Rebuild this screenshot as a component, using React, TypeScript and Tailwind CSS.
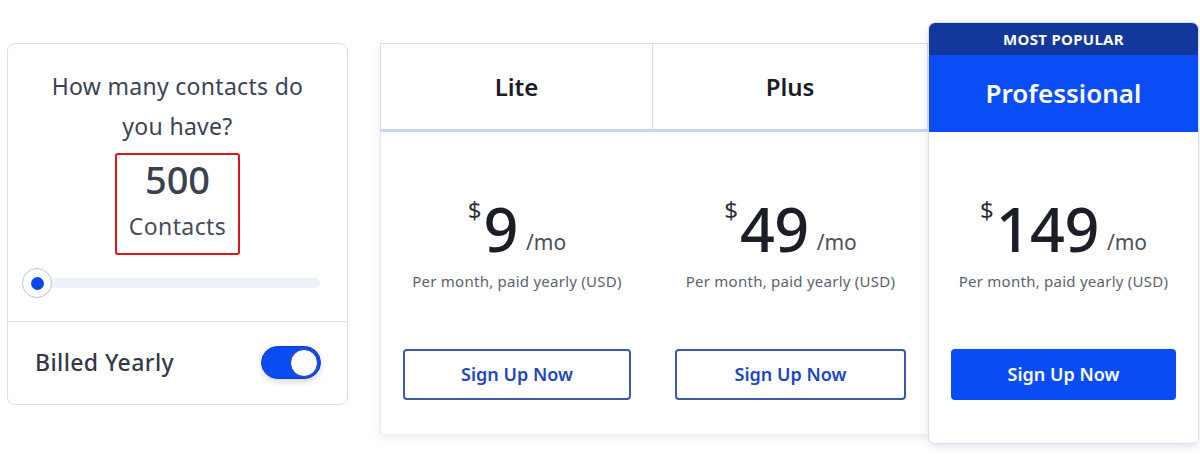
import React from "react";

const font = { fontFamily: '"Noto Sans", "Open Sans", sans-serif' };

function Price({ amount }: { amount: string }) {
  return (
    <div className="flex flex-col items-center">
      <div className="flex items-start h-[64px]">
        <span className="text-[24px] leading-none text-[#2b2f38] mt-[1px] mr-[2px]">$</span>
        <span className="text-[61px] leading-[64px] font-medium text-[#1b1e26] tracking-[-0.5px]">{amount}</span>
        <span className="text-[21px] leading-none text-[#4a5160] self-end mb-[8px] ml-[8px]">/mo</span>
      </div>
      <div className="mt-[9px] text-[15px] tracking-[0.25px] text-[#5b6270]">Per month, paid yearly (USD)</div>
    </div>
  );
}

function PlanBody({ amount, filled }: { amount: string; filled?: boolean }) {
  return (
    <div className="flex flex-col items-center pt-[65px] px-[22px]">
      <Price amount={amount} />
      <button
        className={
          filled
            ? "mt-[56px] w-full h-[51px] rounded-[4px] bg-[#0a4cf4] text-white text-[18px] font-semibold"
            : "mt-[56px] w-full h-[51px] rounded-[4px] border-2 border-[#3a59ad] bg-white text-[#1c46c2] text-[18px] font-semibold"
        }
      >
        Sign Up Now
      </button>
    </div>
  );
}

export default function App() {
  return (
    <div className="w-[1200px] h-[466px] bg-white flex items-start pl-[7px] overflow-hidden" style={font}>
      {/* Left card */}
      <div className="mt-[43px] w-[341px] h-[362px] rounded-[8px] border border-[#d6e0f0] flex flex-col">
        <div className="flex flex-col items-center pt-[22px]">
          <div className="text-[23px] leading-[40px] tracking-[0.3px] text-[#3c4352] text-center">
            How many contacts do
            <br />
            you have?
          </div>
          <div className="mt-[7px] w-[125px] h-[102px] border-2 border-[#d9161c] rounded-[3px] flex flex-col items-center">
            <div className="text-[38px] leading-[40px] mt-[4px] font-medium text-[#3a4150]">500</div>
            <div className="text-[23px] leading-[30px] mt-[12px] tracking-[0.4px] text-[#474e5c]">Contacts</div>
          </div>
        </div>
        <div className="relative mt-[13px] mx-[14px] h-[30px] flex items-center">
          <div className="ml-[1px] w-[297px] h-[10px] rounded-full bg-[#eef1f7]" />
          <div className="absolute left-0 top-0 w-[30px] h-[30px] rounded-full bg-white border border-[#b9c6de] flex items-center justify-center">
            <div className="w-[13px] h-[13px] rounded-full bg-[#0a47ee]" />
          </div>
        </div>
        <div className="mt-[23px] border-t border-[#d6e0f0]" />
        <div className="flex-1 flex items-center justify-between pl-[27px] pr-[26px] pb-[1px]">
          <span className="text-[23px] font-medium tracking-[0.4px] text-[#323a48]">Billed Yearly</span>
          <div className="w-[60px] h-[33px] rounded-full bg-[#0a4cf4] border border-[#1a3eb8] flex items-center justify-end pr-[2px] shadow-[0_3px_6px_rgba(0,0,0,0.15)]">
            <div className="w-[28px] h-[28px] rounded-full bg-white border border-[#1d3fb0]" />
          </div>
        </div>
      </div>

      {/* Lite / Plus table */}
      <div className="ml-[32px] mt-[43px] w-[548px] h-[391px] flex flex-col bg-white shadow-[0_3px_8px_rgba(60,80,120,0.12)]">
        <div className="h-[89px] flex border border-b-[3px] border-[#d4def0] border-b-[#c8d6f0]">
          <div className="w-[272px] flex items-center justify-center border-r border-[#d4def0] text-[24px] font-semibold text-[#1a1d24]">
            Lite
          </div>
          <div className="flex-1 flex items-center justify-center text-[24px] font-semibold text-[#1a1d24]">
            Plus
          </div>
        </div>
        <div className="flex-1 flex border-l border-[#e4eaf4]">
          <div className="w-[272px]">
            <PlanBody amount="9" />
          </div>
          <div className="flex-1">
            <PlanBody amount="49" />
          </div>
        </div>
      </div>

      {/* Professional */}
      <div className="mt-[22px] w-[271px] h-[422px] flex flex-col rounded-[7px] bg-white border border-[#d6e0f0] shadow-[0_3px_8px_rgba(60,80,120,0.14)] overflow-hidden">
        <div className="h-[32px] bg-[#11389a] flex items-center justify-center text-white text-[15px] font-bold tracking-[0.3px]">
          MOST POPULAR
        </div>
        <div className="h-[77px] bg-[#0a4df7] flex items-center justify-center text-white text-[26px] font-semibold">
          Professional
        </div>
        <PlanBody amount="149" filled />
      </div>
    </div>
  );
}
